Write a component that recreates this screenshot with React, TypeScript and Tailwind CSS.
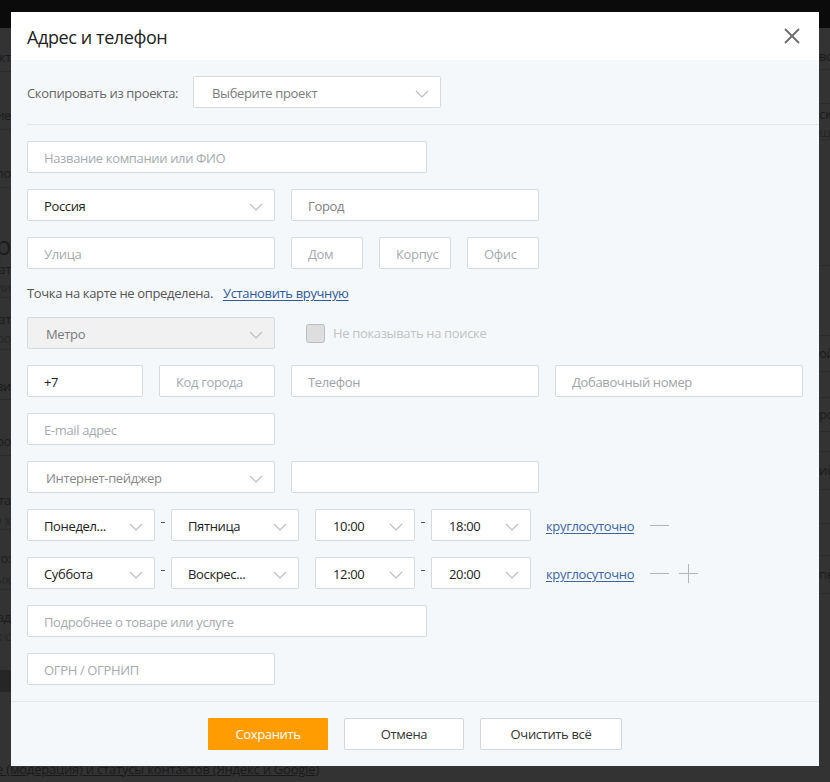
import React from "react";

const font = { fontFamily: '"Open Sans", "Noto Sans", sans-serif' };

function Chevron() {
  return (
    <svg width="14" height="8" viewBox="0 0 14 8" className="shrink-0">
      <path d="M1 1 L7 7 L13 1" fill="none" stroke="#b9bdc1" strokeWidth="1.2" />
    </svg>
  );
}

interface FieldProps {
  text: string;
  width: string;
  value?: boolean;
  tone?: string;
}

function Field({ text, width, value, tone }: FieldProps) {
  return (
    <div
      className={`${width} h-8 shrink-0 flex items-center px-4 pt-[3px] bg-white border border-[#d6dadd] rounded-[2px] text-[13px] whitespace-nowrap ${
        value ? "text-[#222]" : tone ?? "text-[#a5aaaf]"
      }`}
    >
      {text}
    </div>
  );
}

function Select({
  text,
  width,
  value,
  tone,
  pad = "pl-4",
  disabled,
}: FieldProps & { pad?: string; disabled?: boolean }) {
  return (
    <div
      className={`${width} h-8 shrink-0 flex items-center justify-between ${pad} pr-[11px] pt-[3px] border border-[#d6dadd] rounded-[2px] text-[13px] whitespace-nowrap ${
        disabled ? "bg-[#f1f1f1]" : "bg-white"
      } ${value ? "text-[#222]" : tone ?? "text-[#808080]"}`}
    >
      <span>{text}</span>
      <Chevron />
    </div>
  );
}

function Dash() {
  return (
    <div className="w-4 h-8 shrink-0 flex justify-center">
      <div className="w-[4px] h-px bg-[#555] mt-[13px]" />
    </div>
  );
}

function ScheduleRow({
  from,
  to,
  start,
  end,
  plus,
}: {
  from: string;
  to: string;
  start: string;
  end: string;
  plus?: boolean;
}) {
  return (
    <div className="flex items-center h-8">
      <Select text={from} width="w-[128px]" value />
      <Dash />
      <Select text={to} width="w-[128px]" value />
      <div className="w-4" />
      <Select text={start} width="w-[100px]" value pad="pl-[17px]" />
      <Dash />
      <Select text={end} width="w-[100px]" value pad="pl-[17px]" />
      <a className="ml-[15px] pt-[3px] text-[13px] text-[#3b66a3] underline underline-offset-2">
        круглосуточно
      </a>
      <div className="ml-4 w-[19px] h-px bg-[#b4b4b4]" />
      {plus && (
        <div className="ml-[10px] w-[19px] h-[19px] relative">
          <div className="absolute left-0 right-0 top-[9px] h-px bg-[#b4b4b4]" />
          <div className="absolute top-0 bottom-0 left-[9px] w-px bg-[#b4b4b4]" />
        </div>
      )}
    </div>
  );
}

type Frag = { h: string; text?: string; cls?: string; line?: boolean; box?: boolean };

const leftFrags: Frag[] = [
  { h: "h-[16px]" },
  { h: "h-[28px]", text: "Контакт", line: true },
  { h: "h-[30px]" },
  { h: "h-[28px]", text: "Название", line: true },
  { h: "h-[30px]" },
  { h: "h-[28px]", text: "Способ по", line: true },
  { h: "h-[40px]" },
  { h: "h-[34px]", text: "Гр", cls: "text-[26px] leading-none" },
  { h: "h-[16px]", text: "Дат" },
  { h: "h-[20px]", text: "линии", cls: "text-[12px] text-[#262626]", line: true },
  { h: "h-[14px]" },
  { h: "h-[16px]", text: "Дат" },
  { h: "h-[22px]", text: "про", cls: "text-[12px] text-[#262626]", line: true },
  { h: "h-[24px]" },
  { h: "h-[26px]", text: "связи", line: true },
  { h: "h-[28px]" },
  { h: "h-[28px]", text: "Про", line: true },
  { h: "h-[34px]" },
  { h: "h-[22px]", text: "работа" },
  { h: "h-[18px]", text: "о х", cls: "text-[12px] text-[#262626]", line: true },
  { h: "h-[18px]" },
  { h: "h-[22px]", text: "тело:" },
  { h: "h-[20px]", text: "ных", cls: "text-[12px] text-[#262626]", line: true },
  { h: "h-[18px]" },
  { h: "h-[20px]", text: "пад" },
  { h: "h-[18px]", text: "к с", cls: "text-[12px] text-[#262626]" },
  { h: "h-[24px]" },
  { h: "h-[22px]", box: true },
];

const rightFrags: Frag[] = [
  { h: "h-[16px]" },
  { h: "h-[26px]", text: "все", line: true },
  { h: "h-[34px]", line: true },
  { h: "h-[22px]", text: "ский" },
  { h: "h-[14px]", text: "щи", cls: "text-[11px] text-[#262626]", line: true },
  { h: "h-[126px]", line: true },
  { h: "h-[70px]", line: true },
  { h: "h-[36px]", text: "ой", line: true },
  { h: "h-[26px]", line: true },
  { h: "h-[34px]", text: "рои", line: true },
  { h: "h-[20px]", line: true },
  { h: "h-[38px]", text: "ис", line: true },
  { h: "h-[34px]", line: true },
  { h: "h-[32px]", line: true },
  { h: "h-[38px]", text: "пе", line: true },
];

function Strip({ frags, align }: { frags: Frag[]; align: "end" | "start" }) {
  return (
    <div className="w-[11px] flex flex-col overflow-hidden">
      {frags.map((f, i) => (
        <div
          key={i}
          className={`${f.h} shrink-0 flex items-center whitespace-nowrap overflow-hidden ${
            align === "end" ? "justify-end" : "justify-start"
          } ${f.line ? "border-b border-[#2c2c2c]" : ""} ${f.box ? "bg-[#262626]" : ""}`}
        >
          {f.text && (
            <span className={`text-[13px] text-[#1c1c1c] ${f.cls ?? ""}`}>{f.text}</span>
          )}
        </div>
      ))}
    </div>
  );
}

export default function App() {
  return (
    <div
      className="relative w-[830px] h-[782px] overflow-hidden bg-[#333] tracking-[-0.35px]"
      style={font}
    >
      {/* page behind the overlay */}
      <div className="h-[28px] bg-[#0b0b0b]" />
      <div className="flex justify-between h-[730px]">
        <Strip frags={leftFrags} align="end" />
        <Strip frags={rightFrags} align="start" />
      </div>
      <div className="pt-[2px] text-[13px] text-[#1a1a1a] underline whitespace-nowrap -ml-[4px] tracking-[-0.2px]">
        е (модерация) и статусы контактов (Яндекс и Google)
      </div>

      {/* modal */}
      <div className="absolute left-[11px] top-[12px] w-[808px] h-[754px] bg-[#f5f8fa] flex flex-col">
        <div className="h-12 bg-white flex items-center justify-between pl-4 pr-[19px]">
          <div className="text-[18px] text-[#222] tracking-[-0.4px] pt-[2px]">Адрес и телефон</div>
          <svg width="16" height="16" viewBox="0 0 16 16">
            <path d="M1 1 L15 15 M15 1 L1 15" stroke="#6b6b6b" strokeWidth="1.8" />
          </svg>
        </div>

        <div className="pl-4 pt-4">
          <div className="flex items-center h-8">
            <div className="w-[166px] pt-[3px] text-[13px] text-[#666]">Скопировать из проекта:</div>
            <Select text="Выберите проект" width="w-[248px]" pad="pl-[18px]" tone="text-[#7c7c7c]" />
          </div>
        </div>
        <div className="ml-4 mt-4 border-t border-[#e3e7ea]" />

        <div className="pl-4 pt-4 pb-4 flex flex-col gap-4">
          <Field text="Название компании или ФИО" width="w-[400px]" />
          <div className="flex gap-4">
            <Select text="Россия" width="w-[248px]" value />
            <Field text="Город" width="w-[248px]" tone="text-[#808080]" />
          </div>
          <div className="flex gap-4">
            <Field text="Улица" width="w-[248px]" />
            <Field text="Дом" width="w-[72px]" />
            <Field text="Корпус" width="w-[72px]" />
            <Field text="Офис" width="w-[72px]" />
          </div>
          <div className="h-4 flex items-center pt-[2px] text-[13px] whitespace-nowrap">
            <span className="text-[#555]">Точка на карте не определена.</span>
            <a className="ml-[10px] text-[#2f5a96] underline underline-offset-2">Установить вручную</a>
          </div>
          <div className="flex items-center">
            <Select text="Метро" width="w-[248px]" pad="pl-[18px]" tone="text-[#7a7a7a]" disabled />
            <div className="ml-[31px] w-[19px] h-[19px] rounded-[3px] bg-[#dedede] border border-[#bdbdbd]" />
            <span className="ml-2 pt-[2px] text-[13px] text-[#c2c2c2]">Не показывать на поиске</span>
          </div>
          <div className="flex gap-4">
            <Field text="+7" width="w-[116px]" value />
            <Field text="Код города" width="w-[116px]" />
            <Field text="Телефон" width="w-[248px]" tone="text-[#a0a4a8]" />
            <Field text="Добавочный номер" width="w-[248px]" tone="text-[#a0a4a8]" />
          </div>
          <Field text="E-mail адрес" width="w-[248px]" />
          <div className="flex gap-4">
            <Select text="Интернет-пейджер" width="w-[248px]" pad="pl-[18px]" tone="text-[#888]" />
            <Field text="" width="w-[248px]" />
          </div>
          <ScheduleRow from="Понедел..." to="Пятница" start="10:00" end="18:00" />
          <ScheduleRow from="Суббота" to="Воскрес..." start="12:00" end="20:00" plus />
          <Field text="Подробнее о товаре или услуге" width="w-[400px]" />
          <Field text="ОГРН / ОГРНИП" width="w-[248px]" />
        </div>

        <div className="border-t border-[#e3e7ea] pt-4 flex justify-center gap-4">
          <button className="w-[120px] h-8 pt-[2px] bg-[#ff9c00] text-white text-[13px] rounded-[1px]">
            Сохранить
          </button>
          <button className="w-[120px] h-8 pt-[2px] bg-white border border-[#d3d7da] text-[#333] text-[13px] rounded-[2px]">
            Отмена
          </button>
          <button className="w-[142px] h-8 pt-[2px] bg-white border border-[#d3d7da] text-[#333] text-[13px] rounded-[2px]">
            Очистить всё
          </button>
        </div>
      </div>
    </div>
  );
}
